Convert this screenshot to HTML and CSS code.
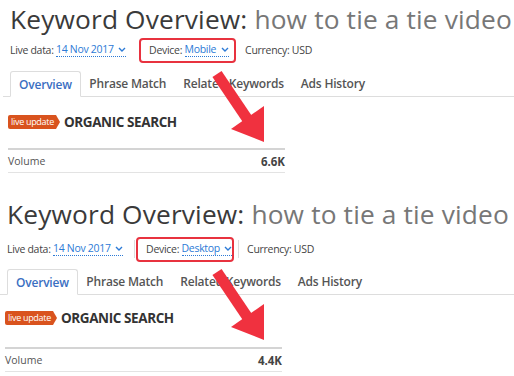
FILE: index.html
```html
<!DOCTYPE html>
<html>
<head>
<meta charset="utf-8">
<link rel="stylesheet" href="styles.css">
</head>
<body>
<div class="panel first">
  <h1 class="title"><span class="kw">Keyword Overview:</span> <span class="q">how to tie a tie video</span></h1>
  <div class="meta">
    <span class="item">Live data: <span class="link">14 Nov 2017 <svg class="chev" viewBox="0 0 8 5"><path d="M1 1l3 3 3-3"/></svg></span></span>
    <span class="item boxed">Device: <span class="link">Mobile <svg class="chev" viewBox="0 0 8 5"><path d="M1 1l3 3 3-3"/></svg></span></span>
    <span class="item cur">Currency: USD</span>
  </div>
  <div class="tabs">
    <span class="tab active">Overview</span>
    <span class="tab">Phrase Match</span>
    <span class="tab">Related Keywords</span>
    <span class="tab">Ads History</span>
  </div>
  <div class="section-head">
    <span class="badge">live update</span>
    <span class="stitle">ORGANIC SEARCH</span>
  </div>
  <div class="row"><span>Volume</span><span class="val">6.6K</span></div>
  <svg class="arrow" viewBox="0 0 80 80"><line x1="7" y1="6" x2="38" y2="52"/><polygon points="21,61 54,38 54,74"/></svg>
</div>
<div class="panel second">
  <h1 class="title"><span class="kw">Keyword Overview:</span> <span class="q">how to tie a tie video</span></h1>
  <div class="meta">
    <span class="item">Live data: <span class="link">14 Nov 2017 <svg class="chev" viewBox="0 0 8 5"><path d="M1 1l3 3 3-3"/></svg></span></span>
    <span class="sep"></span>
    <span class="item boxed">Device: <span class="link">Desktop <svg class="chev" viewBox="0 0 8 5"><path d="M1 1l3 3 3-3"/></svg></span></span>
    <span class="sep"></span>
    <span class="item cur">Currency: USD</span>
  </div>
  <div class="tabs">
    <span class="tab active">Overview</span>
    <span class="tab">Phrase Match</span>
    <span class="tab">Related Keywords</span>
    <span class="tab">Ads History</span>
  </div>
  <div class="section-head">
    <span class="badge">live update</span>
    <span class="stitle">ORGANIC SEARCH</span>
  </div>
  <div class="row"><span>Volume</span><span class="val">4.4K</span></div>
  <svg class="arrow" viewBox="0 0 80 80"><line x1="7" y1="6" x2="38" y2="52"/><polygon points="21,61 54,38 54,74"/></svg>
</div>
</body>
</html>
```
FILE: styles.css
```css
* { box-sizing: border-box; }
html, body { margin: 0; padding: 0; background: #fff; }
body {
  font-family: "Open Sans", "Noto Sans", sans-serif;
  color: #333;
  width: 514px;
  height: 376px;
  overflow: hidden;
}
.panel {
  position: relative;
  height: 197px;
  padding-top: 3px;
}
.first { padding-left: 3px; }
.second { padding-left: 0; padding-top: 1px; height: 179px; }
.title {
  margin: 0 0 0 7px;
  font-weight: 400;
  font-size: 26.3px;
  line-height: 32px;
  letter-spacing: 0.15px;
  white-space: nowrap;
}
.kw { color: #3a3a3a; }
.q { color: #777; }
.meta {
  display: flex;
  align-items: center;
  height: 26px;
  margin-top: 2px;
  padding-left: 7px;
  font-size: 10.5px;
  letter-spacing: -0.3px;
  color: #444;
}
.second .meta { margin-top: 6px; }
.item { display: inline-flex; align-items: center; white-space: pre; }
.link {
  color: #2c7ad6;
  border-bottom: 1px dotted #2c7ad6;
  display: inline-flex;
  align-items: center;
  gap: 2px;
  line-height: 13px;
}
.chev { width: 8px; height: 5px; fill: none; stroke: #2c7ad6; stroke-width: 1.4; }
.boxed {
  width: 97px;
  height: 25px;
  margin-left: 13px;
  padding: 0 0 0 8px;
  border: 2px solid #e8323f;
  border-radius: 4px;
}
.first .cur { margin-left: 9px; }
.second .boxed { margin-left: 1px; width: 98px; }
.sep { width: 1px; height: 18px; background: #ddd; margin: 0 0 0 11px; }
.second .boxed + .sep { margin-left: 4px; }
.second .cur { margin-left: 8px; }
.tabs {
  display: flex;
  margin-top: 8px;
  margin-left: 0;
  padding-left: 7px;
  border-bottom: 1px solid #ddd;
  height: 26px;
  font-size: 12px;
  font-weight: 600;
  letter-spacing: -0.2px;
  color: #555;
}
.second .tabs { margin-top: 7px; }
.tab {
  display: flex;
  align-items: center;
  padding: 0 8.5px;
  white-space: nowrap;
}
.tab.active {
  color: #3b6fc2;
  border: 1px solid #ddd;
  border-bottom: 1px solid #fff;
  border-radius: 3px 3px 0 0;
  margin-bottom: -1px;
  padding: 0 8px;
  background: #fff;
}
.section-head {
  display: flex;
  align-items: center;
  height: 14px;
  margin-top: 18px;
  padding-left: 5px;
}
.second .section-head { margin-top: 16px; }
.badge {
  position: relative;
  background: #d9531e;
  color: #fff;
  font-size: 9px;
  letter-spacing: -0.3px;
  line-height: 14px;
  height: 14px;
  padding: 0 2px 0 3px;
  border-radius: 2px 0 0 2px;
  margin-right: 8px;
}
.badge::after {
  content: "";
  position: absolute;
  right: -4px;
  top: 0;
  border-left: 4px solid #d9531e;
  border-top: 7px solid transparent;
  border-bottom: 7px solid transparent;
}
.stitle {
  font-size: 13.5px;
  font-weight: 700;
  color: #333;
  letter-spacing: -0.4px;
}
.row {
  display: flex;
  justify-content: space-between;
  align-items: center;
  margin: 19px 0 0 5px;
  width: 277px;
  height: 25px;
  border-top: 2px solid #d4d4d4;
  border-bottom: 1px solid #e3e3e3;
  font-size: 10.5px;
  color: #555;
}
.second .row { margin-top: 22px; }
.val { font-weight: 700; font-size: 11.5px; color: #444; }
.arrow {
  position: absolute;
  left: 210px;
  top: 68px;
  width: 80px;
  height: 80px;
}
.second .arrow { top: 69px; }
.arrow line { stroke: #f0313f; stroke-width: 11; }
.arrow polygon { fill: #f0313f; }
```
